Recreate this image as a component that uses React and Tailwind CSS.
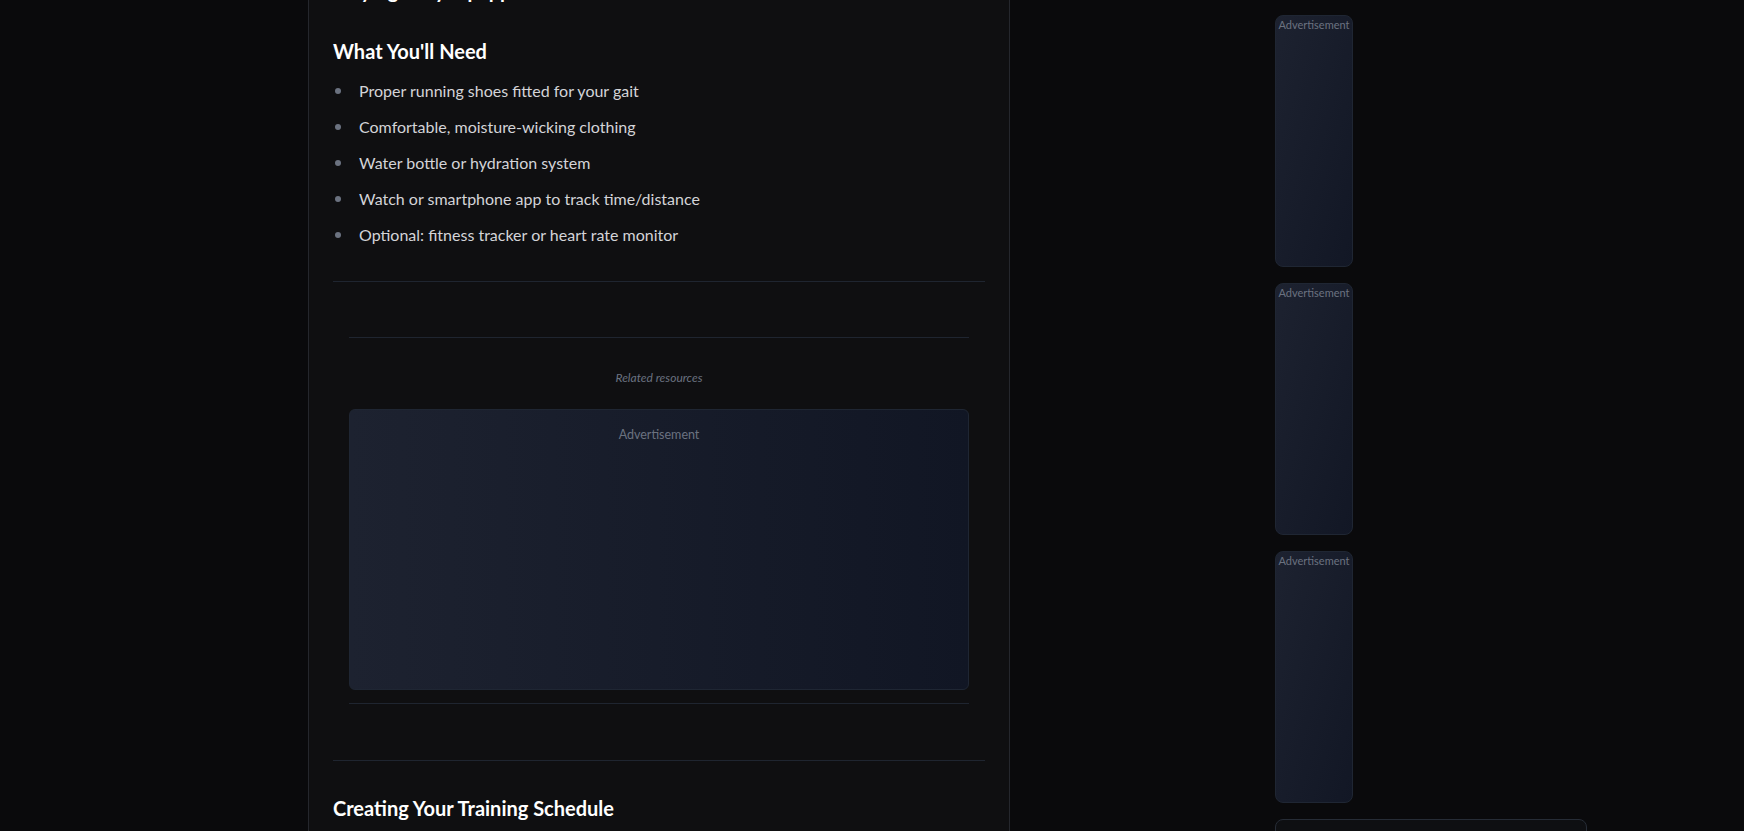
import React from 'react';

const needs = [
  'Proper running shoes fitted for your gait',
  'Comfortable, moisture-wicking clothing',
  'Water bottle or hydration system',
  'Watch or smartphone app to track time/distance',
  'Optional: fitness tracker or heart rate monitor',
];

function SideAd() {
  return (
    <div className="w-[78px] h-[252px] shrink-0 rounded-lg border border-[#1f2633] bg-linear-to-br from-[#1d2230] to-[#121725] flex justify-center">
      <span className="text-[11px] leading-[15px] pt-[1px] text-[#6b7280]">Advertisement</span>
    </div>
  );
}

export default function App() {
  return (
    <div
      className="h-[831px] overflow-hidden bg-[#0a0a0c] flex"
      style={{ fontFamily: 'Lato, "Liberation Sans", sans-serif' }}
    >
      <div className="w-[308px] shrink-0" />

      {/* Article column */}
      <main className="w-[702px] shrink-0 border-x border-[#25272d] bg-[#0f0f11] px-6">
        <h3 className="-mt-[24px] text-xl leading-7 font-bold text-white">Staying Fully Equipped</h3>

        <h2 className="mt-[33px] text-xl leading-7 font-bold text-white">What You'll Need</h2>
        <ul className="mt-[14px] flex flex-col gap-3">
          {needs.map((item) => (
            <li key={item} className="flex items-center text-base leading-6 text-[#d4d4d8]">
              <span className="w-[6px] h-[6px] rounded-full bg-[#6b7280] ml-[2px] mr-[18px] shrink-0" />
              {item}
            </li>
          ))}
        </ul>

        <div className="mt-[34px] border-t border-[#1f2530]" />

        {/* In-article ad slot */}
        <section className="mx-4 mt-[55px] border-y border-[#1f2530] pt-8 pb-[13px]">
          <p className="text-center text-xs leading-4 italic text-[#6b7280]">Related resources</p>
          <div className="mt-[23px] h-[281px] rounded-md border border-[#1f2633] bg-linear-to-r from-[#1d2230] to-[#111624] flex justify-center">
            <span className="mt-[17px] text-[12.5px] leading-4 text-[#6b7280]">Advertisement</span>
          </div>
        </section>

        <div className="mt-[56px] border-t border-[#1f2530]" />

        <h2 className="mt-[33px] text-xl leading-7 font-bold text-white">Creating Your Training Schedule</h2>
      </main>

      {/* Sidebar */}
      <aside className="ml-[265px] w-[312px] shrink-0 pt-[15px] flex flex-col gap-4">
        <SideAd />
        <SideAd />
        <SideAd />
        <div className="h-[200px] shrink-0 rounded-lg border border-[#262c36] bg-[#0e0f12]" />
      </aside>
    </div>
  );
}
